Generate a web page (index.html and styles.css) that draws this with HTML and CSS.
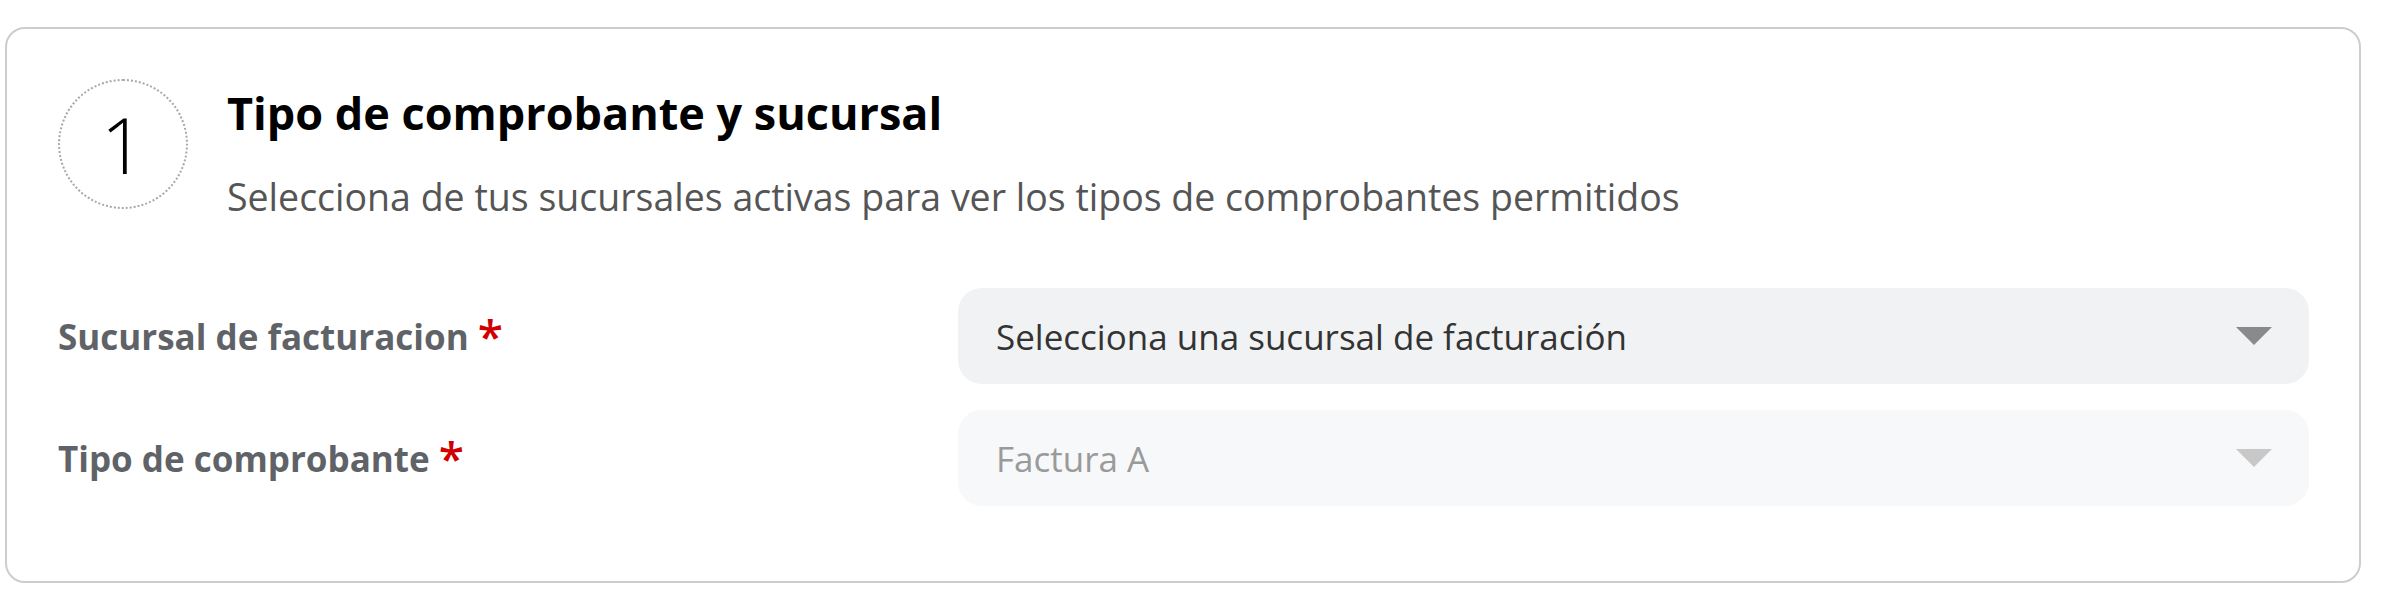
FILE: index.html
```html
<!DOCTYPE html>
<html lang="es">
<head>
<meta charset="utf-8">
<title>Tipo de comprobante y sucursal</title>
<link rel="stylesheet" href="styles.css">
</head>
<body>
<div class="page">
  <section class="card">
    <header class="step-header">
      <div class="step-number">1</div>
      <div class="step-text">
        <h2 class="step-title">Tipo de comprobante y sucursal</h2>
        <p class="step-subtitle">Selecciona de tus sucursales activas para ver los tipos de comprobantes permitidos</p>
      </div>
    </header>
    <div class="form-grid">
      <label class="field-label">Sucursal de facturacion <span class="required">*</span></label>
      <div class="select">
        <span class="select-value">Selecciona una sucursal de facturación</span>
        <span class="select-arrow"></span>
      </div>
      <label class="field-label">Tipo de comprobante <span class="required">*</span></label>
      <div class="select select-disabled">
        <span class="select-value">Factura A</span>
        <span class="select-arrow"></span>
      </div>
    </div>
  </section>
</div>
</body>
</html>
```

FILE: styles.css
```css
html, body {
  margin: 0;
  padding: 0;
  background: #ffffff;
}

body {
  font-family: "Open Sans", "Noto Sans", "Liberation Sans", sans-serif;
}

.page {
  padding: 27px 21px 7px 5px;
}

.card {
  box-sizing: border-box;
  height: 556px;
  border: 2px solid #cdcdcd;
  border-radius: 20px;
  padding: 50px 50px 0 51px;
  background: #ffffff;
}

.step-header {
  display: flex;
  align-items: flex-start;
  gap: 39px;
}

.step-number {
  box-sizing: border-box;
  flex: 0 0 auto;
  width: 130px;
  height: 130px;
  border: 2px dotted #a8a8a8;
  border-radius: 50%;
  display: flex;
  align-items: center;
  justify-content: center;
  font-size: 78px;
  font-weight: 300;
  color: #000000;
  line-height: 1;
}

.step-text {
  padding-top: 6px;
}

.step-title {
  margin: 0;
  font-size: 45px;
  line-height: 56px;
  font-weight: 700;
  color: #000000;
}

.step-subtitle {
  margin: 28px 0 0;
  font-size: 37.5px;
  line-height: 56px;
  font-weight: 400;
  color: #555555;
}

.form-grid {
  display: grid;
  grid-template-columns: 900px 1fr;
  row-gap: 26px;
  align-items: center;
  margin-top: 63px;
}

.field-label {
  font-size: 35px;
  font-weight: 700;
  color: #5f6368;
  display: flex;
  align-items: flex-start;
  gap: 9px;
}

.required {
  color: #d00000;
  font-size: 46px;
  font-weight: 600;
  line-height: 1;
  margin-top: -1px;
}

.select {
  box-sizing: border-box;
  height: 96px;
  border-radius: 24px;
  background: #f1f2f4;
  padding: 0 37px 0 38px;
  display: flex;
  align-items: center;
  justify-content: space-between;
  font-size: 35px;
  color: #333333;
}

.select-disabled {
  background: #f7f8f9;
  color: #9a9a9a;
}

.select-arrow {
  width: 0;
  height: 0;
  border-left: 18px solid transparent;
  border-right: 18px solid transparent;
  border-top: 18px solid #8a8a8a;
}

.select-disabled .select-arrow {
  border-top-color: #c8c8c8;
}
```
